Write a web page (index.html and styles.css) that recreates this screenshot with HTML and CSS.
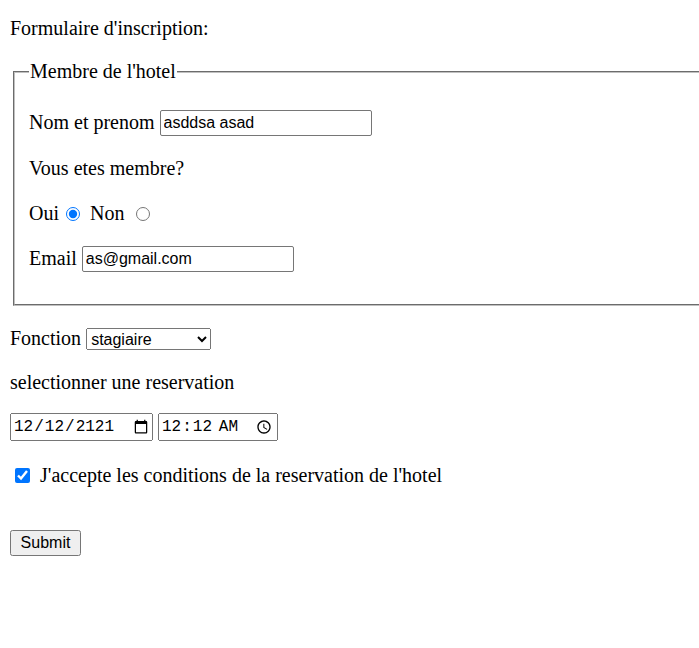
FILE: index.html
```html
<!DOCTYPE html>
<html lang="fr">
<head>
<meta charset="utf-8">
<title>Formulaire</title>
<link rel="stylesheet" href="styles.css">
</head>
<body>
<form class="form">
  <p class="line title">Formulaire d'inscription:</p>
  <fieldset class="group">
    <legend class="legend">Membre de l'hotel</legend>
    <p class="line nom"><span>Nom et prenom</span><input class="text" type="text" value="asddsa asad"></p>
    <p class="line">Vous etes membre?</p>
    <p class="line"><span>Oui</span><input class="radio radio-a" type="radio" name="m" checked><span>Non</span><input class="radio radio-b" type="radio" name="m"></p>
    <p class="line last"><span>Email</span><input class="text" type="email" value="as@gmail.com"></p>
  </fieldset>
  <p class="line fonction"><span>Fonction</span><select class="select"><option>stagiaire</option></select></p>
  <p class="line selec">selectionner une reservation</p>
  <p class="line date-line"><input class="date" type="date" value="2121-12-12"><input class="time" type="time" value="00:12"></p>
  <p class="line"><input class="check" type="checkbox" checked><span>J'accepte les conditions de la reservation de l'hotel</span></p>
  <p class="line submit-line"><button class="submit" type="submit">Submit</button></p>
</form>
</body>
</html>
```
FILE: styles.css
```css
html {
  overflow: hidden;
}
body {
  margin: 17px 0 0 10px;
  font-family: "Liberation Serif", serif;
  font-size: 20px;
  color: #000;
  background: #fff;
}
.line {
  display: flex;
  align-items: center;
  gap: 5px;
  height: 23px;
  margin: 0 0 22px 0;
  line-height: 23px;
  white-space: nowrap;
}
.title {
  margin-bottom: 20px;
}
.line.nom {
  margin-bottom: 23px;
}
.line.last {
  margin-bottom: 0;
}
.group {
  margin: 0 -40px 21px 3px;
  border: 2px groove #c0c0c0;
  padding: 28px 14px 34px;
}
.legend {
  padding: 0 1px;
}
.text {
  font-family: "Liberation Sans", sans-serif;
  font-size: 16px;
  width: 212px;
  height: 26px;
  box-sizing: border-box;
  border: 1px solid #767676;
  border-radius: 2px;
  padding: 1px 3px;
  margin: 0;
}
.fonction {
  margin-bottom: 21px;
}
.selec {
  margin-bottom: 21px;
}
.select {
  font-family: "Liberation Sans", sans-serif;
  font-size: 16px;
  width: 125px;
  height: 22px;
  margin: 1px 0 0;
}
.date-line {
  height: 24px;
  margin-bottom: 25px;
}
.date, .time {
  font-family: "Liberation Mono", monospace;
  font-size: 16px;
  height: 28px;
  box-sizing: border-box;
  margin: 0;
}
.date { width: 143px; }
.time { width: 120px; }
.check {
  width: 15px;
  height: 15px;
  margin: 0 5px 0 5px;
}
.radio {
  width: 14px;
  height: 14px;
}
.radio-a {
  margin: 0 5px 0 2px;
}
.radio-b {
  margin: 0 0 0 7px;
}
.submit-line {
  margin-top: 44px;
}
.submit {
  font-family: "Liberation Sans", sans-serif;
  font-size: 16px;
  width: 71px;
  height: 26px;
  padding: 0;
  margin: 0;
}
```
